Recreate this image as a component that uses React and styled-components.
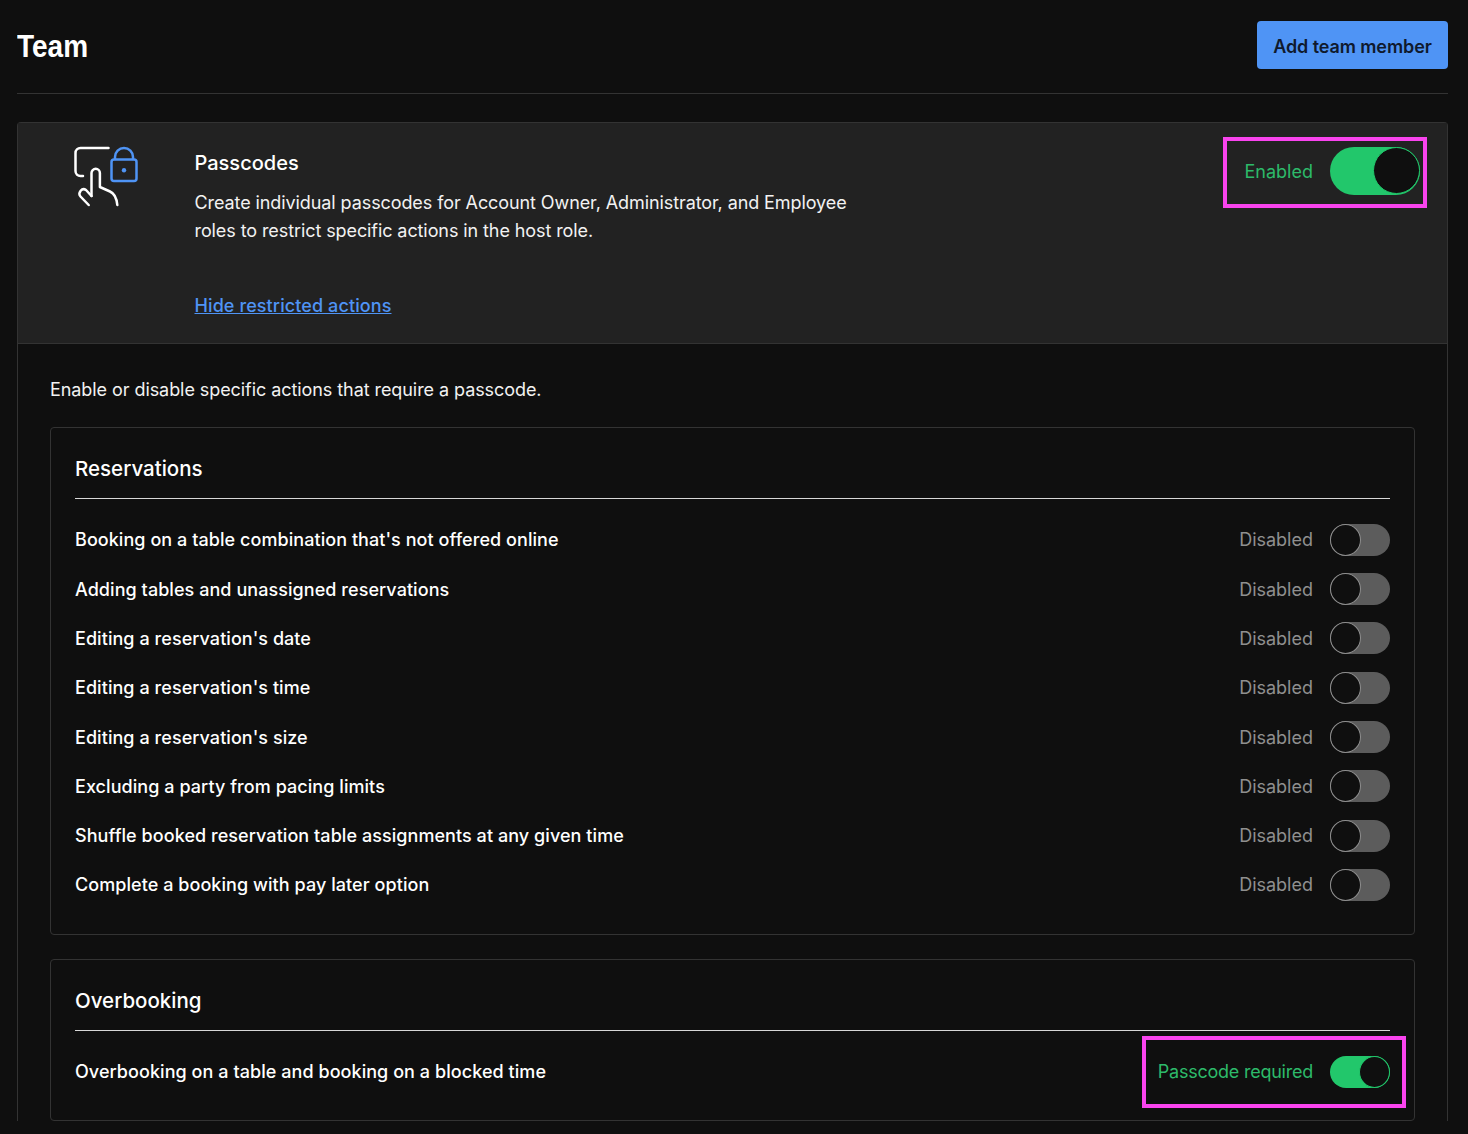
import React from 'react'
import styled, { createGlobalStyle } from 'styled-components'

const GlobalStyle = createGlobalStyle`
  html, body {
    margin: 0;
    background: #0f0f0f;
    color: #fff;
    font-family: Inter, "Liberation Sans", sans-serif;
    overflow: hidden;
    height: 1134px;
  }
`
const Page = styled.div`
  padding: 0 20px 0 17px;
`
const Header = styled.header`
  display: flex;
  justify-content: space-between;
  align-items: center;
  height: 90px;
  padding-bottom: 3px;
  border-bottom: 1px solid #333;
`
const Title = styled.h1`
  margin: 1px 0 0;
  font-family: "Liberation Sans", sans-serif;
  font-size: 32px;
  line-height: 36px;
  font-weight: 700;
  transform: scaleX(0.875);
  transform-origin: left center;
`
const AddButton = styled.button`
  width: 191px;
  height: 48px;
  padding: 2px 0 0;
  border: 0;
  border-radius: 4px;
  background: #4f94f5;
  color: #0f1a2e;
  font: 600 18px Inter, sans-serif;
  letter-spacing: -0.1px;
`
const Card = styled.section`
  margin-top: 28px;
  border: 1px solid #333;
  border-bottom: 0;
  border-radius: 4px 4px 0 0;
`
const CardTop = styled.div`
  display: flex;
  height: 220px;
  background: #222;
  border-bottom: 1px solid #333;
`
const IconCol = styled.div`
  width: 176.5px;
  flex: none;
  padding: 20px 0 0 51px;
  box-sizing: border-box;
`
const Intro = styled.div`
  flex: 1;
  padding-top: 26px;
`
const IntroTitle = styled.h2`
  margin: 0 0 12px;
  font-size: 20px;
  line-height: 28px;
  font-weight: 500;
`
const IntroText = styled.p`
  margin: 0;
  width: 680px;
  font-size: 18px;
  line-height: 28px;
  letter-spacing: -0.09px;
  color: #f2f2f2;
`
const HideLink = styled.a`
  display: block;
  margin-top: 47px;
  font-size: 18px;
  line-height: 28px;
  font-weight: 500;
  letter-spacing: 0.1px;
  color: #4f94f5;
  text-decoration: underline;
`
const TopSwitch = styled.div`
  padding: 24px 27px 0 0;
`
const Body = styled.div`
  padding: 32px 32px 0;
`
const Lead = styled.p`
  margin: 0 0 23px;
  font-size: 18px;
  line-height: 28px;
  letter-spacing: -0.07px;
  color: #f2f2f2;
`
const Box = styled.div`
  padding: 26px 24px ${p => p.$tail}px;
  margin-bottom: 24px;
  border: 1px solid #333;
  border-radius: 4px;
`
const BoxTitle = styled.h3`
  margin: 0;
  padding-bottom: 14px;
  border-bottom: 1px solid #d8d8d8;
  font-size: 20.5px;
  line-height: 30px;
  font-weight: 500;
`
const Rows = styled.div`
  padding-top: 24.85px;
  display: flex;
  flex-direction: column;
  gap: 17.3px;
`
const Row = styled.div`
  display: flex;
  justify-content: space-between;
  align-items: center;
  height: 32px;
`
const RowLabel = styled.span`
  font-size: 18px;
  font-weight: 500;
  letter-spacing: 0.06px;
`
const SwitchGroup = styled.div`
  position: relative;
  display: flex;
  align-items: center;
  gap: 17px;
  &::after {
    content: ${p => (p.$marked ? '""' : 'none')};
    position: absolute;
    inset: -20px -16px -20px -15.5px;
    border: 4px solid #f944ee;
    pointer-events: none;
  }
`
const BigGroup = styled(SwitchGroup)`
  &::after {
    inset: -10px -7px -13px -22px;
  }
`
const State = styled.span`
  font-size: 18px;
  color: ${p => (p.$on ? '#2dba6a' : '#8f8f8f')};
`
const RequiredState = styled(State)`
  letter-spacing: -0.24px;
`
const Track = styled.span`
  display: block;
  position: relative;
  width: ${p => (p.$big ? 90 : 60)}px;
  height: ${p => (p.$big ? 48 : 32)}px;
  border-radius: 24px;
  background: ${p => (p.$on ? '#22c76b' : '#5c5c5c')};
`
const Knob = styled.span`
  position: absolute;
  top: 0;
  ${p => (p.$on ? 'right: 0;' : 'left: 0;')}
  width: ${p => (p.$big ? 47 : 31)}px;
  height: ${p => (p.$big ? 47 : 32)}px;
  box-sizing: border-box;
  border-radius: 50%;
  background: #0f0f0f;
  border: 1px solid ${p => (p.$on ? '#22c76b' : '#8f8f8f')};
`

const reservations = [
  'Booking on a table combination that\'s not offered online',
  'Adding tables and unassigned reservations',
  'Editing a reservation\'s date',
  'Editing a reservation\'s time',
  'Editing a reservation\'s size',
  'Excluding a party from pacing limits',
  'Shuffle booked reservation table assignments at any given time',
  'Complete a booking with pay later option',
]

function PasscodeIcon() {
  return (
    <svg width="70" height="66" viewBox="69 143 70 66" fill="none" strokeWidth="2.5" strokeLinecap="round" strokeLinejoin="round">
      <path stroke="#fff" d="M108.5 148H80.5a5 5 0 0 0-5 5V171a5 5 0 0 0 5 5H83" />
      <path stroke="#fff" d="M91.5 196V173a4.2 4.2 0 0 1 8.4 0V187L110 191.5c4 1.7 6.5 5.5 7.3 13.5" />
      <path stroke="#fff" d="M88.7 205L80.5 196.5c-3-3.5 1.5-9.5 5.5-6.5L91.5 196" />
      <rect x="111.5" y="159.5" width="25" height="21.5" rx="2.5" stroke="#4f94f5" />
      <path stroke="#4f94f5" d="M115 159V157a9 9 0 0 1 18 0V159" />
      <circle cx="124" cy="170.3" r="2.2" fill="#4f94f5" />
    </svg>
  )
}

function Toggle({ on, big }) {
  return (
    <Track $on={on} $big={big}>
      <Knob $on={on} $big={big} />
    </Track>
  )
}

function App() {
  return (
    <Page>
      <GlobalStyle />
      <Header>
        <Title>Team</Title>
        <AddButton>Add team member</AddButton>
      </Header>
      <Card>
        <CardTop>
          <IconCol>
            <PasscodeIcon />
          </IconCol>
          <Intro>
            <IntroTitle>Passcodes</IntroTitle>
            <IntroText>
              Create individual passcodes for Account Owner, Administrator, and Employee roles to restrict specific actions in the host role.
            </IntroText>
            <HideLink>Hide restricted actions</HideLink>
          </Intro>
          <TopSwitch>
            <BigGroup $marked>
              <State $on>Enabled</State>
              <Toggle on big />
            </BigGroup>
          </TopSwitch>
        </CardTop>
        <Body>
          <Lead>Enable or disable specific actions that require a passcode.</Lead>
          <Box $tail={33}>
            <BoxTitle>Reservations</BoxTitle>
            <Rows>
              {reservations.map(label => (
                <Row key={label}>
                  <RowLabel>{label}</RowLabel>
                  <SwitchGroup>
                    <State>Disabled</State>
                    <Toggle />
                  </SwitchGroup>
                </Row>
              ))}
            </Rows>
          </Box>
          <Box $tail={32}>
            <BoxTitle>Overbooking</BoxTitle>
            <Rows>
              <Row>
                <RowLabel>Overbooking on a table and booking on a blocked time</RowLabel>
                <SwitchGroup $marked>
                  <RequiredState $on>Passcode required</RequiredState>
                  <Toggle on />
                </SwitchGroup>
              </Row>
            </Rows>
          </Box>
        </Body>
      </Card>
    </Page>
  )
}

export default App
